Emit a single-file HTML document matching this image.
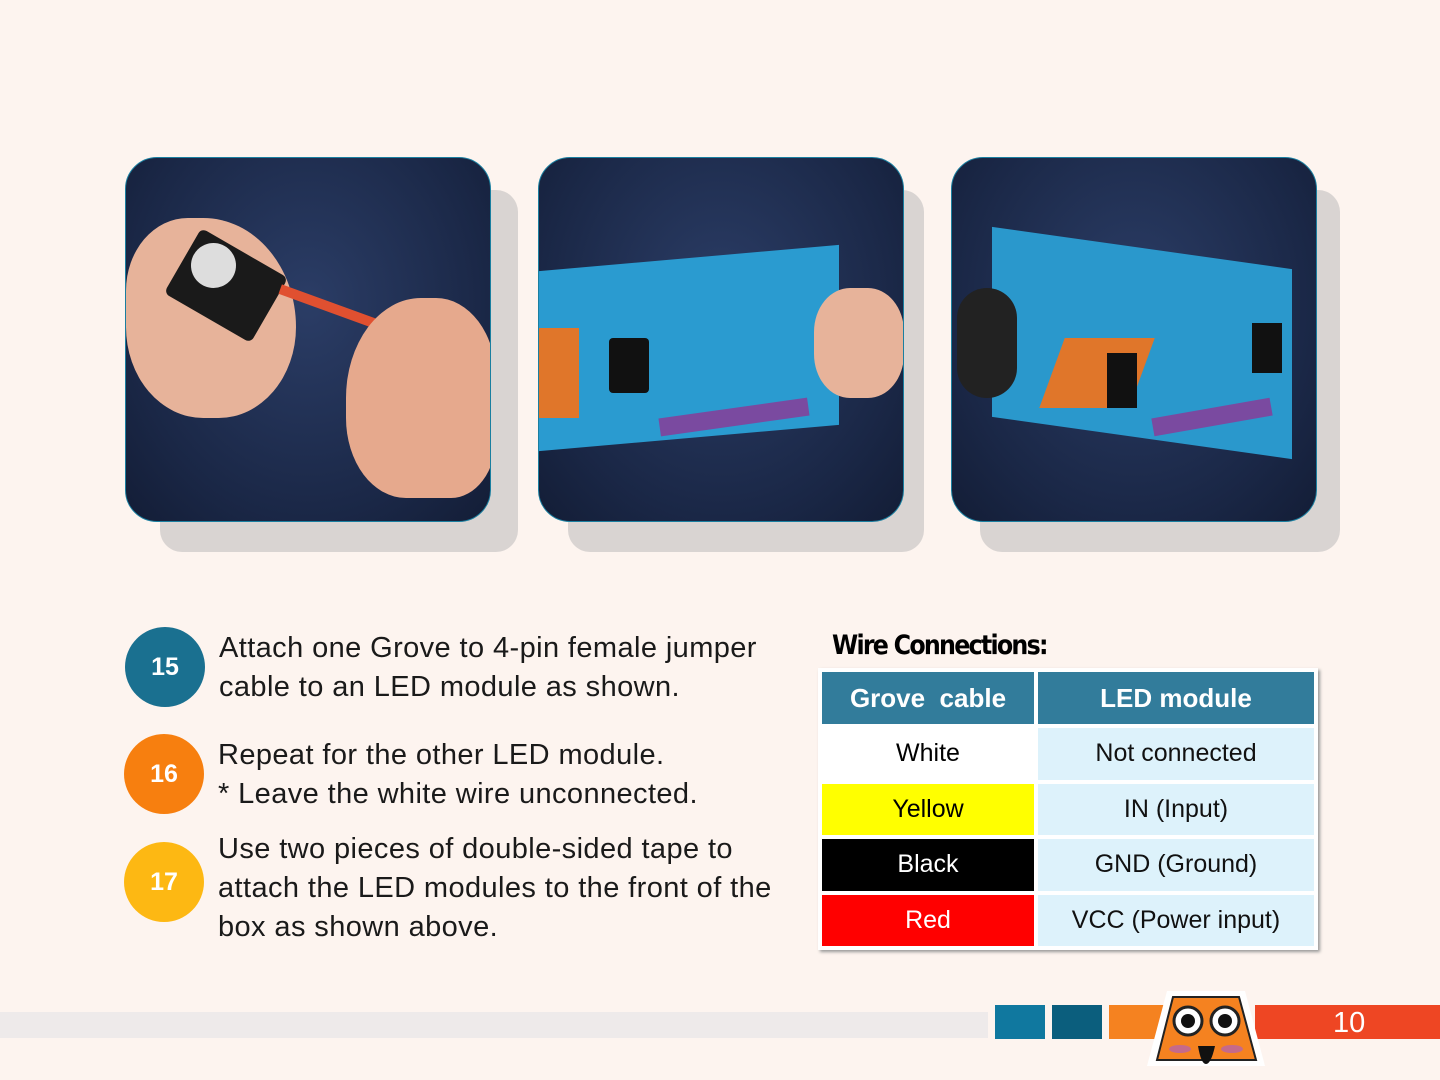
<!DOCTYPE html><html><head><style>
body{margin:0;width:1440px;height:1080px;background:#fdf4ef;position:relative;overflow:hidden;font-family:"Liberation Sans",sans-serif}
.sh{position:absolute;background:#d9d4d2;border-radius:22px}
.ph{position:absolute;top:157px;width:364px;height:363px;border:1.5px solid #1a7fa0;border-radius:32px;overflow:hidden;background:radial-gradient(ellipse at 50% 40%,#2b3d66,#1a2746 70%,#131d36)}
.ph div{position:absolute}
.c{position:absolute;width:80px;height:80px;border-radius:50%;color:#fff;font-weight:bold;font-size:25px;text-align:center;line-height:80px}
.t{position:absolute;left:219px;font-size:29px;line-height:39px;color:#1a1a1a;letter-spacing:0.4px}
table{position:absolute;left:818px;top:668px;width:500px;height:282px;border-collapse:separate;border-spacing:4px;background:#fff;box-shadow:2px 2px 3px #999;font-size:25px;text-align:center}
td{padding:0}
th{background:#327c9b;color:#fff;font-size:26px;height:50px}
.r{background:#ddf2fb;color:#111}
</style></head><body>
<div class="sh" style="left:160px;top:190px;width:358px;height:362px"></div>
<div class="sh" style="left:568px;top:190px;width:356px;height:362px"></div>
<div class="sh" style="left:980px;top:190px;width:360px;height:362px"></div>
<div class="ph" style="left:125px">
<div style="left:0;top:60px;width:170px;height:200px;background:#e7b39a;border-radius:40% 60% 50% 50%"></div>
<div style="left:50px;top:90px;width:100px;height:75px;background:#1a1a1a;transform:rotate(30deg);border-radius:6px"></div>
<div style="left:65px;top:85px;width:45px;height:45px;background:#ddd;border-radius:50%"></div>
<div style="left:150px;top:150px;width:140px;height:10px;background:#e05030;transform:rotate(20deg)"></div>
<div style="left:220px;top:140px;width:150px;height:200px;background:#e6a98d;border-radius:50% 40% 30% 40%"></div>
</div>
<div class="ph" style="left:538px">
<div style="left:0;top:100px;width:300px;height:180px;background:#2a9bd0;transform:skewY(-5deg)"></div>
<div style="left:0;top:170px;width:40px;height:90px;background:#e0762a"></div>
<div style="left:70px;top:180px;width:40px;height:55px;background:#111;border-radius:4px"></div>
<div style="left:120px;top:250px;width:150px;height:18px;background:#7a4aa0;transform:rotate(-8deg)"></div>
<div style="left:275px;top:130px;width:90px;height:110px;background:#e7b39a;border-radius:40%"></div>
</div>
<div class="ph" style="left:951px">
<div style="left:40px;top:90px;width:300px;height:190px;background:#2a98cc;transform:skewY(8deg)"></div>
<div style="left:5px;top:130px;width:60px;height:110px;background:#222;border-radius:30px"></div>
<div style="left:100px;top:180px;width:90px;height:70px;background:#e0762a;transform:skewX(-20deg)"></div>
<div style="left:155px;top:195px;width:30px;height:55px;background:#111"></div>
<div style="left:300px;top:165px;width:30px;height:50px;background:#111"></div>
<div style="left:200px;top:250px;width:120px;height:18px;background:#7a4aa0;transform:rotate(-10deg)"></div>
</div>
<div class="c" style="left:125px;top:627px;background:#1a7090">15</div>
<div class="c" style="left:124px;top:734px;background:#f77f0f">16</div>
<div class="c" style="left:124px;top:842px;background:#fdb813">17</div>
<div class="t" style="top:629px">Attach one Grove to 4-pin female jumper<br>cable to an LED module as shown.</div>
<div class="t" style="top:736px;left:218px">Repeat for the other LED module.<br>* Leave the white wire unconnected.</div>
<div class="t" style="top:830px;left:218px">Use two pieces of double-sided tape to<br>attach the LED modules to the front of the<br>box as shown above.</div>
<div style="position:absolute;left:832px;top:630px;font-size:27px;font-weight:bold;font-family:'DejaVu Sans',sans-serif;letter-spacing:-2px;transform:scaleX(.88);transform-origin:left">Wire Connections:</div>
<table>
<tr><th style="width:210px">Grove&nbsp; cable</th><th>LED module</th></tr>
<tr><td style="background:#fff">White</td><td class="r">Not connected</td></tr>
<tr><td style="background:#ff0">Yellow</td><td class="r">IN (Input)</td></tr>
<tr><td style="background:#000;color:#fff">Black</td><td class="r">GND (Ground)</td></tr>
<tr><td style="background:#f00;color:#fff">Red</td><td class="r">VCC (Power input)</td></tr>
</table>
<div style="position:absolute;left:0;top:1012px;width:988px;height:26px;background:#eeeaea"></div>
<div style="position:absolute;left:995px;top:1005px;width:50px;height:34px;background:#10789f"></div>
<div style="position:absolute;left:1052px;top:1005px;width:50px;height:34px;background:#0b5e7d"></div>
<div style="position:absolute;left:1109px;top:1005px;width:60px;height:34px;background:#f58220"></div>
<div style="position:absolute;left:1255px;top:1005px;width:185px;height:34px;background:#ee4623;color:#fff;font-size:29px;line-height:36px;padding-left:78px;box-sizing:border-box">10</div>
<svg style="position:absolute;left:1145px;top:988px" width="125" height="82">
<path d="M22 3H100L120 78H2Z" fill="#fff"/>
<path d="M28 9H94L111 72H12Z" fill="#f58220" stroke="#222" stroke-width="2"/>
<circle cx="43" cy="33" r="14" fill="#fff" stroke="#222" stroke-width="3"/><circle cx="43" cy="33" r="7" fill="#111"/>
<circle cx="80" cy="33" r="14" fill="#fff" stroke="#222" stroke-width="3"/><circle cx="80" cy="33" r="7" fill="#111"/>
<ellipse cx="35" cy="61" rx="11" ry="4" fill="#c56a8a"/><ellipse cx="87" cy="61" rx="11" ry="4" fill="#c56a8a"/>
<path d="M53 58H70Q66 76 61 76Q56 76 53 58Z" fill="#111"/>
</svg>
</body></html>
